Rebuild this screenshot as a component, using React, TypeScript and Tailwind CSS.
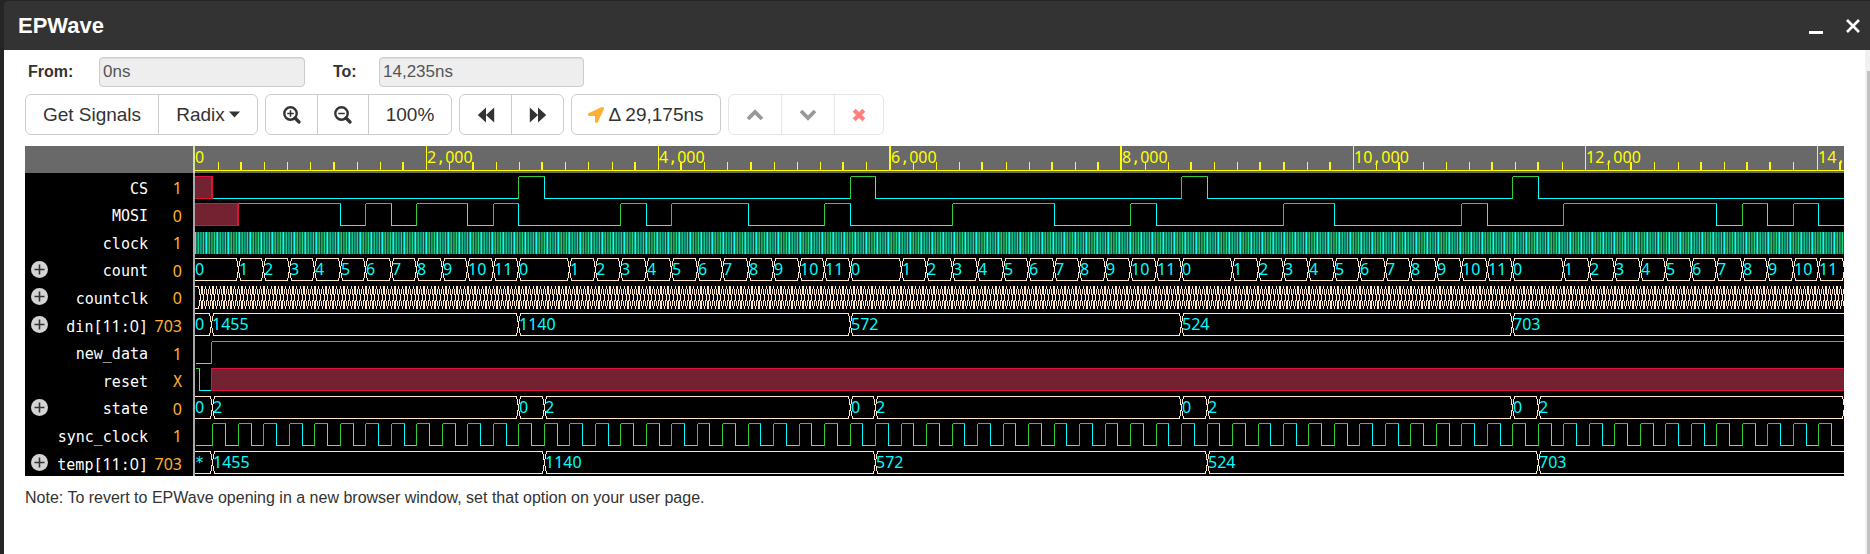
import React from "react";
import { FaLocationArrow } from "react-icons/fa";

const SCALE = 0.11586;
const END = 14235;
const px = (ns: number) => Math.max(0, Math.round(ns * SCALE - 0.5));

const GREEN = "#32cd32";
const CYAN = "#00ffff";
const BISQUE = "#ffe4c4";
const RED = "#dc143c";
const MAROON = "#742232";

type Level = "0" | "1" | "x";
type Step = [number, Level];
type BusStep = [number, string];

const frames = [0, 1, 2, 3, 4];

const csSteps: Step[] = [
  [0, "x"],
  [155, "0"],
  ...frames.flatMap((f): Step[] => [
    [2795 + 2860 * f, "1"],
    [3015 + 2860 * f, "0"],
  ]),
];

const mosiSteps: Step[] = [
  [0, "x"],
  ...[
    375, 1255, 1475, 1695, 1915, 2355, 2575, 2795, 3675, 3895, 4115, 4775, 5435, 5655, 6535, 7415,
    8075, 8295, 9395, 9835, 10935, 11155, 11815, 13135, 13355, 13575, 13795, 14015,
  ].map((t, i): Step => [t, i % 2 === 0 ? "1" : "0"]),
];

const syncSteps: Step[] = [[0, "0"]];
for (let t = 155; t <= END; t += 220) {
  syncSteps.push([t, "1"], [t + 110, "0"]);
}

const countSteps: BusStep[] = [[0, "0"]];
frames.forEach((f) => {
  for (let n = 1; n <= 11; n++) countSteps.push([155 + 220 * n + 2860 * f, String(n)]);
  countSteps.push([2795 + 2860 * f, "0"]);
});

const countclkSteps: BusStep[] = [[0, ""]];
for (let t = 45; t < END; t += 220 / 7) countclkSteps.push([t, ""]);

const dinSteps: BusStep[] = [
  [0, "0"], [140, "1455"], [2795, "1140"], [5655, "572"], [8515, "524"], [11375, "703"],
];
const tempSteps: BusStep[] = [
  [0, "*"], [155, "1455"], [3015, "1140"], [5875, "572"], [8735, "524"], [11595, "703"],
];
const stateSteps: BusStep[] = [
  [0, "0"],
  [155, "2"],
  ...frames.flatMap((f): BusStep[] => [
    [2795 + 2860 * f, "0"],
    [3015 + 2860 * f, "2"],
  ]),
];

type Signal = {
  name: string;
  value: string;
  expandable?: boolean;
  wave: (top: number) => React.ReactNode;
};

const rowTop = (i: number) => Math.floor(30 + 27.5 * i);

const pieces = (text: string) => text.split(/(\d+)/).filter(Boolean);
const isDigits = (s: string) => /^\d+$/.test(s);

function Mono({ text }: { text: string }) {
  return (
    <>
      {pieces(text).map((p, i) => (
        <span key={i} className={isDigits(p) ? "font-['Noto_Sans',sans-serif] text-[16px]" : ""}>
          {p}
        </span>
      ))}
    </>
  );
}

function SvgMono({ x, y, text, color }: { x: number; y: number; text: string; color: string }) {
  return (
    <text x={x} y={y} fill={color} className="font-['DejaVu_Sans_Mono',monospace] text-[15px]">
      {pieces(text).map((p, i) => (
        <tspan key={i} className={isDigits(p) ? "font-['Noto_Sans',sans-serif] text-[16px]" : ""}>
          {p}
        </tspan>
      ))}
    </text>
  );
}

function LogicWave({ steps, top }: { steps: Step[]; top: number }) {
  return (
    <g shapeRendering="crispEdges">
      {steps.map(([t, level], i) => {
        if (t > END) return null;
        const a = px(t);
        const b = px(steps[i + 1]?.[0] ?? END + 100);
        if (level === "x") {
          return (
            <g key={i}>
              <rect x={a} y={top} width={b - a} height={23} fill={MAROON} />
              <path
                d={`M${a} ${top + 0.5}H${b}M${a} ${top + 22.5}H${b}${a > 0 ? `M${a + 0.5} ${top}v23` : ""}`}
                stroke={RED}
                fill="none"
              />
              <rect x={b - 1} y={top} width={2} height={23} fill={RED} />
            </g>
          );
        }
        const color = level === "1" ? GREEN : CYAN;
        const prev = steps[i - 1]?.[1];
        return (
          <g key={i} fill={color}>
            {prev && prev !== "x" && <rect x={a} y={top + 1} width={1} height={22} />}
            <rect x={a + 1} y={level === "1" ? top : top + 22} width={Math.max(0, b - a)} height={1} />
          </g>
        );
      })}
    </g>
  );
}

function BusWave({ steps, top }: { steps: BusStep[]; top: number }) {
  const shown = steps.filter(([t]) => t <= END);
  return (
    <g>
      <g shapeRendering="crispEdges" stroke={BISQUE} fill="none">
        {shown.map(([t], i) => {
          const a = i === 0 ? -4 : px(t) + 0.5;
          const b = px(shown[i + 1]?.[0] ?? END + 100) + 0.5;
          return (
            <path
              key={i}
              d={`M${a} ${top + 12}L${a + 1} ${top + 5}L${a + 2} ${top + 0.5}H${b - 2}L${b - 1} ${top + 6}L${b} ${top + 12}L${b - 1} ${top + 17}L${b - 2} ${top + 22.5}H${a + 2}L${a + 1} ${top + 17}Z`}
            />
          );
        })}
      </g>
      {shown.map(([t, label], i) =>
        label && px(t) < 1645 ? (
          <SvgMono key={i} x={i === 0 ? 0 : px(t) + 1} y={top + 17} text={label} color={CYAN} />
        ) : null,
      )}
    </g>
  );
}

const clockColumns = [
  "#00ffff", "#13795b", "#1f8a3f", "#16c393", "#0c4f3f", "#17a184",
  "#1f8a3f", "#12705b", "#1cd590", "#11503c", "#0cb8a8",
];

function ClockWave({ top }: { top: number }) {
  return (
    <g>
      <defs>
        <pattern id="clock-columns" width="11" height="24" patternUnits="userSpaceOnUse">
          {clockColumns.map((c, i) => (
            <rect key={i} x={i} y="0" width="1" height="24" fill={c} shapeRendering="crispEdges" />
          ))}
        </pattern>
      </defs>
      <rect x="0" y={top + 1} width="100%" height="22" fill="url(#clock-columns)" />
    </g>
  );
}

const signals: Signal[] = [
  { name: "CS", value: "1", wave: (y) => <LogicWave steps={csSteps} top={y} /> },
  { name: "MOSI", value: "0", wave: (y) => <LogicWave steps={mosiSteps} top={y} /> },
  { name: "clock", value: "1", wave: (y) => <ClockWave top={y} /> },
  { name: "count", value: "0", expandable: true, wave: (y) => <BusWave steps={countSteps} top={y} /> },
  { name: "countclk", value: "0", expandable: true, wave: (y) => <BusWave steps={countclkSteps} top={y} /> },
  { name: "din[11:0]", value: "703", expandable: true, wave: (y) => <BusWave steps={dinSteps} top={y} /> },
  { name: "new_data", value: "1", wave: (y) => <LogicWave steps={[[0, "0"], [140, "1"]]} top={y} /> },
  { name: "reset", value: "X", wave: (y) => <LogicWave steps={[[0, "1"], [40, "0"], [140, "x"]]} top={y} /> },
  { name: "state", value: "0", expandable: true, wave: (y) => <BusWave steps={stateSteps} top={y} /> },
  { name: "sync_clock", value: "1", wave: (y) => <LogicWave steps={syncSteps} top={y} /> },
  { name: "temp[11:0]", value: "703", expandable: true, wave: (y) => <BusWave steps={tempSteps} top={y} /> },
];

const wideTicks = new Set([
  2, 6, 9, 12, 15, 19, 21, 24, 28, 30, 34, 37, 39, 40, 43, 46, 47, 49, 52, 56, 58, 62, 65, 67, 68, 71,
]);

function Ruler() {
  return (
    <g>
      <rect width="100%" height="27" fill="#696969" />
      <rect y="24" width="100%" height="1" fill="#ffff00" />
      {Array.from({ length: 72 }, (_, i) => {
        const major = i % 10 === 0;
        const x = px(i * 200);
        return (
          <g key={i}>
            {i > 0 && (
              <rect
                x={x - (wideTicks.has(i) ? 1 : 0)}
                y={major ? 0 : 16}
                width={wideTicks.has(i) ? 2 : 1}
                height={major ? 24 : 8}
                fill="#ffff00"
              />
            )}
            {major && <SvgMono x={i === 0 ? 0 : x + 1} y={17} text={(i * 200).toLocaleString("en-US")} color="#ffff00" />}
          </g>
        );
      })}
    </g>
  );
}

function Waves() {
  return (
    <svg className="block h-[330px] w-full" role="img" aria-label="Signal waveforms">
      <Ruler />
      {signals.map((s, i) => (
        <g key={s.name}>{s.wave(rowTop(i))}</g>
      ))}
    </svg>
  );
}

function ZoomIcon({ plus }: { plus?: boolean }) {
  return (
    <svg viewBox="0 0 18 18" className="size-[18px]" fill="none" stroke="#333" aria-hidden="true">
      <circle cx="7.5" cy="7.5" r="6.2" strokeWidth="2.4" />
      <path d="M12 12l4 4" strokeWidth="3.2" strokeLinecap="round" />
      <path d={plus ? "M4.2 7.5h6.6M7.5 4.2v6.6" : "M4.2 7.5h6.6"} strokeWidth="1.5" />
    </svg>
  );
}

function SkipIcon({ back }: { back?: boolean }) {
  return (
    <svg viewBox="0 0 18 16" className="h-4 w-[18px]" fill="#333" aria-hidden="true">
      <path d={back ? "M9 .5v15L.8 8zM17.2 .5v15L9 8z" : "M.8 .5v15L9 8zM9 .5v15L17.2 8z"} />
    </svg>
  );
}

function ChevronIcon({ up }: { up?: boolean }) {
  return (
    <svg viewBox="0 0 18 14" className="h-[14px] w-[18px]" fill="none" stroke="#333" strokeWidth="3.8" aria-hidden="true">
      <path d={up ? "M2 11l7-7 7 7" : "M2 3l7 7 7-7"} />
    </svg>
  );
}

const group = "flex h-[41px] divide-x divide-[#ccc] rounded-[6px] border border-[#ccc]";
const button = "flex items-center justify-center gap-1";

export default function App() {
  return (
    <div className="flex min-h-screen flex-col bg-[#252525] pt-px pl-1 font-['Liberation_Sans',Arial,sans-serif] text-[#333]">
      <header className="flex h-[49px] items-center justify-between rounded-tl-[4px] bg-[#333] pr-[10px] pl-[14px]">
        <h1 className="text-[22px] leading-[26px] font-bold text-white">EPWave</h1>
        <div className="flex items-center gap-[22px]">
          <button aria-label="Minimize">
            <svg viewBox="0 0 16 16" className="size-4" aria-hidden="true">
              <rect x="1" y="13" width="14" height="3" fill="#fff" />
            </svg>
          </button>
          <button aria-label="Close">
            <svg viewBox="0 0 14 14" className="size-[14px]" stroke="#fff" strokeWidth="2.6" aria-hidden="true">
              <path d="M1 1l12 12M13 1L1 13" />
            </svg>
          </button>
        </div>
      </header>
      <div className="flex flex-1 bg-white">
        <main className="min-w-0 flex-1 px-[21px] pt-[7px]">
          <form className="flex h-[30px] items-center text-[16px]">
            <label htmlFor="from" className="w-[74px] pl-[3px] leading-5 font-bold">
              From:
            </label>
            <input
              id="from"
              disabled
              defaultValue="0ns"
              className="h-[30px] w-[206px] rounded-[4px] border border-[#ccc] bg-[#eee] px-[3px] text-[17px] text-[#555] shadow-[inset_0_1px_1px_rgba(0,0,0,0.075)]"
            />
            <label htmlFor="to" className="ml-7 w-[46px] leading-5 font-bold">
              To:
            </label>
            <input
              id="to"
              disabled
              defaultValue="14,235ns"
              className="h-[30px] w-[205px] rounded-[4px] border border-[#ccc] bg-[#eee] px-[3px] text-[17px] text-[#555] shadow-[inset_0_1px_1px_rgba(0,0,0,0.075)]"
            />
          </form>
          <div className="mt-[7px] flex gap-[7px] text-[19px] leading-6">
            <div className={group}>
              <button className={`${button} w-[133px]`}>Get Signals</button>
              <button className={`${button} w-[98px]`}>
                Radix
                <svg viewBox="0 0 11 7" className="h-[7px] w-[11px]" fill="#333" aria-hidden="true">
                  <path d="M0 0.5h11L5.5 6.5z" />
                </svg>
              </button>
            </div>
            <div className={group}>
              <button aria-label="Zoom in" className={`${button} w-[52px]`}>
                <ZoomIcon plus />
              </button>
              <button aria-label="Zoom out" className={`${button} w-[51px]`}>
                <ZoomIcon />
              </button>
              <button className={`${button} w-[82px]`}>100%</button>
            </div>
            <div className={group}>
              <button aria-label="Back" className={`${button} w-[52px]`}>
                <SkipIcon back />
              </button>
              <button aria-label="Forward" className={`${button} w-[51px]`}>
                <SkipIcon />
              </button>
            </div>
            <div className={group}>
              <button className={`${button} w-[148px]`}>
                <FaLocationArrow className="size-4 text-[#ffb031]" aria-hidden="true" />
                Δ 29,175ns
              </button>
            </div>
            <div className={`${group} opacity-50`}>
              <button disabled aria-label="Move up" className={`${button} w-[53px]`}>
                <ChevronIcon up />
              </button>
              <button disabled aria-label="Move down" className={`${button} w-[53px]`}>
                <ChevronIcon />
              </button>
              <button disabled aria-label="Remove" className={`${button} w-[48px]`}>
                <svg viewBox="0 0 14 14" className="size-[14px]" stroke="#f00" strokeWidth="4.2" aria-hidden="true">
                  <path d="M2.2 2.2l9.6 9.6M11.8 2.2l-9.6 9.6" />
                </svg>
              </button>
            </div>
          </div>
          <section className="mt-[11px] flex bg-black font-['DejaVu_Sans_Mono',monospace] text-[15px]">
            <div className="flex w-[168px] shrink-0 flex-col">
              <div className="h-[27px] bg-[#696969]" />
              <ul className="flex flex-1 flex-col">
                {signals.map((s) => (
                  <li key={s.name} className="flex min-h-0 flex-1 items-center pr-[11px] pl-[6px]">
                    {s.expandable && (
                      <button aria-label={`Expand ${s.name}`}>
                        <svg viewBox="0 0 17 17" className="size-[17px]" aria-hidden="true">
                          <circle cx="8.5" cy="8.5" r="8.5" fill="#d3d3d3" />
                          <path d="M8.5 3.5v10M3.5 8.5h10" stroke="#333" strokeWidth="1.6" />
                        </svg>
                      </button>
                    )}
                    <span className="ml-auto pt-1 leading-5 text-white">
                      <Mono text={s.name} />
                    </span>
                    <span className="w-[34px] pt-1 text-right leading-5 text-[#ffb031]">
                      <Mono text={s.value} />
                    </span>
                  </li>
                ))}
              </ul>
            </div>
            <div className="flex w-[2px] shrink-0 flex-col bg-[#a9a9a9]">
              <div className="h-[27px] bg-[#dcdc9c]" />
            </div>
            <div className="min-w-0 flex-1 overflow-hidden">
              <Waves />
            </div>
          </section>
          <p className="mt-3 text-[16px] leading-5">
            Note: To revert to EPWave opening in a new browser window, set that option on your user page.
          </p>
        </main>
        <div className="flex w-[5px] bg-[#f1f1f1] pt-[21px] pl-[2px]">
          <div className="flex-1 bg-[#c1c1c1]" />
        </div>
      </div>
    </div>
  );
}
